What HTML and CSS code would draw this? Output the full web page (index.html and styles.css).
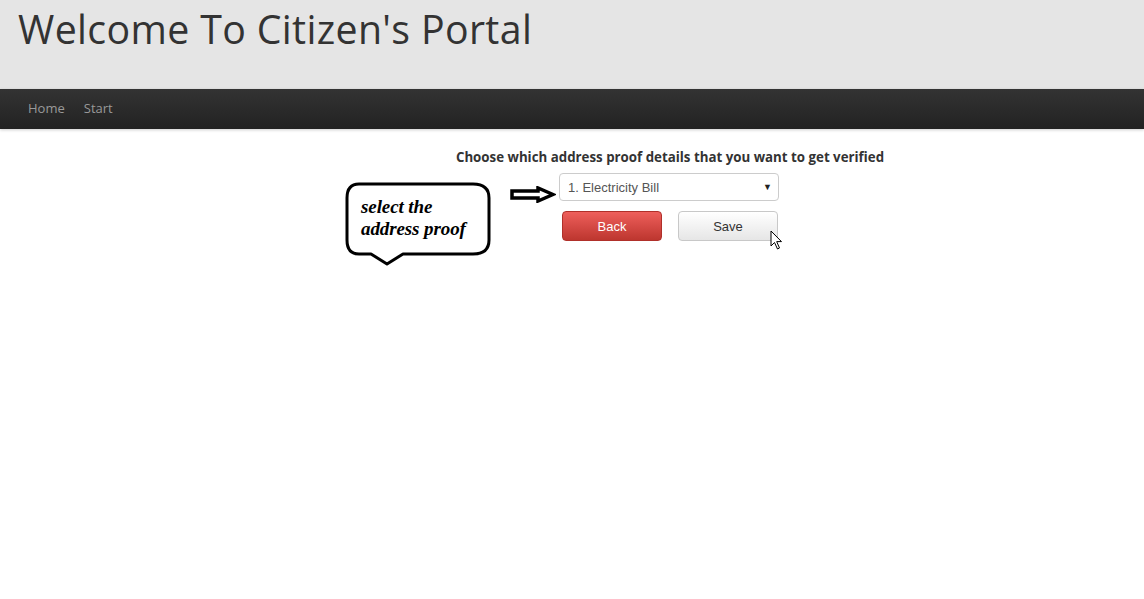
FILE: index.html
```html
<!DOCTYPE html>
<html>
<head>
<meta charset="utf-8">
<title>Citizen's Portal</title>
<link rel="stylesheet" href="styles.css">
</head>
<body>
<header class="masthead">
  <h1 class="title">Welcome To Citizen's Portal</h1>
</header>
<nav class="navbar">
  <a class="nav-link" href="#">Home</a>
  <a class="nav-link" href="#">Start</a>
</nav>
<main class="content">
  <h4 class="prompt">Choose which address proof details that you want to get verified</h4>
  <form class="proof-form">
    <div class="annotation">
      <svg class="bubble" width="148" height="86" viewBox="0 0 148 86">
        <path d="M14 2 H128 Q144 2 144 16 V58 Q144 72 128 72 H58 L42 82 L26 72 H14 Q2 72 2 58 V16 Q2 2 14 2 Z" fill="#fff" stroke="#000" stroke-width="3" stroke-linejoin="round"/>
      </svg>
      <span class="bubble-text">select the<br>address proof</span>
      <svg class="arrow" width="46" height="17" viewBox="0 0 46 17">
        <path d="M2 5 H28 V2 L43 8.5 L28 15 V12 H2 Z" fill="#fff" stroke="#000" stroke-width="3.5" stroke-linejoin="miter"/>
      </svg>
    </div>
    <div class="select">
      <span>1. Electricity Bill</span>
      <span class="caret">▼</span>
    </div>
    <div class="actions">
      <button type="button" class="btn btn-danger">Back</button>
      <button type="button" class="btn btn-default">Save</button>
      <svg class="cursor" width="14" height="20" viewBox="0 0 14 20">
        <path d="M1 1 V16 L4.5 12.5 L7.5 19 L9.5 18 L6.7 11.6 H11.5 Z" fill="#fff" stroke="#000" stroke-width="1"/>
      </svg>
    </div>
  </form>
</main>
</body>
</html>
```
FILE: styles.css
```css
html, body {
  margin: 0;
  padding: 0;
  background: #fff;
  font-family: "Open Sans", "Noto Sans", sans-serif;
  color: #333;
}
body {
  min-height: 599px;
}
.masthead {
  background: #e5e5e5;
  height: 89px;
  padding: 0 18px;
  box-sizing: border-box;
}
.title {
  margin: 0;
  padding-top: 4px;
  font-family: "Open Sans", sans-serif;
  font-weight: 400;
  font-size: 39.3px;
  line-height: 50px;
  color: #333;
  letter-spacing: 0.35px;
}
.navbar {
  height: 40px;
  background: linear-gradient(#333, #222);
  display: flex;
  align-items: center;
  padding-left: 28px;
  padding-bottom: 2px;
  box-sizing: border-box;
  gap: 19px;
  box-shadow: 0 1px 3px rgba(0,0,0,0.2);
}
.nav-link {
  color: #999;
  text-decoration: none;
  font-size: 13px;
}
.content {
  display: flex;
  flex-direction: column;
  align-items: center;
  margin-left: 196px;
  padding-top: 18px;
  padding-bottom: 120px;
}
.prompt {
  margin: 0 0 6px 0;
  font-size: 13.3px;
  font-weight: 700;
  line-height: 20px;
  color: #333;
}
.proof-form {
  position: relative;
  display: flex;
  flex-direction: column;
  align-items: center;
  width: 220px;
  margin-left: -2px;
}
.annotation {
  position: absolute;
  left: -214px;
  top: 8px;
  width: 210px;
  height: 90px;
}
.bubble {
  position: absolute;
  left: 0;
  top: 1px;
}
.bubble-text {
  position: absolute;
  left: 16px;
  top: 15px;
  font-family: "Liberation Serif", serif;
  font-style: italic;
  font-weight: 700;
  font-size: 19px;
  line-height: 22px;
  letter-spacing: -0.1px;
  color: #000;
}
.arrow {
  position: absolute;
  left: 165px;
  top: 5px;
}
.select {
  width: 220px;
  height: 28px;
  box-sizing: border-box;
  border: 1px solid #ccc;
  border-radius: 4px;
  background: #fff;
  display: flex;
  align-items: center;
  justify-content: space-between;
  padding: 0 6px 0 8px;
  font-family: "Liberation Sans", Arial, sans-serif;
  font-size: 13px;
  color: #555;
}
.caret {
  font-size: 9px;
  color: #222;
}
.actions {
  position: relative;
  display: flex;
  gap: 16px;
  margin-top: 10px;
  margin-left: 2px;
}
.btn {
  width: 100px;
  height: 30px;
  border-radius: 4px;
  font-family: "Liberation Sans", Arial, sans-serif;
  font-size: 13px;
  padding: 0;
  cursor: pointer;
}
.btn-danger {
  color: #fff;
  background: linear-gradient(#ee5f5b, #bd362f);
  border: 1px solid #b0302a;
}
.btn-default {
  color: #333;
  background: linear-gradient(#fff, #e6e6e6);
  border: 1px solid #c8c8c8;
}
.cursor {
  position: absolute;
  left: 208px;
  top: 19px;
}
```
